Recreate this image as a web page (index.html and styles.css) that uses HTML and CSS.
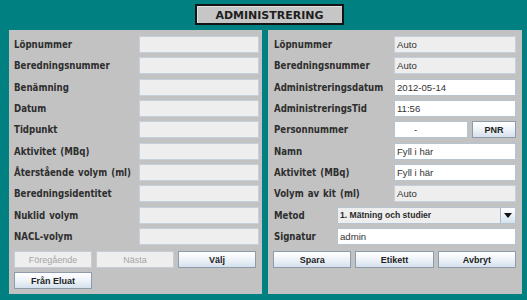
FILE: index.html
```html
<!DOCTYPE html>
<html lang="sv">
<head>
<meta charset="utf-8">
<title>Administrering</title>
<link rel="stylesheet" href="styles.css">
</head>
<body>
<div class="app">
  <div class="titlebar"><div class="title">ADMINISTRERING</div></div>
  <div class="panels">
    <section class="panel panel-left">
      <div class="rows">
        <div class="row"><span class="label">Löpnummer</span><span class="field off"></span></div>
        <div class="row"><span class="label">Beredningsnummer</span><span class="field off"></span></div>
        <div class="row"><span class="label">Benämning</span><span class="field off"></span></div>
        <div class="row"><span class="label">Datum</span><span class="field off"></span></div>
        <div class="row"><span class="label">Tidpunkt</span><span class="field off"></span></div>
        <div class="row"><span class="label">Aktivitet (MBq)</span><span class="field off"></span></div>
        <div class="row"><span class="label">Återstående volym (ml)</span><span class="field off"></span></div>
        <div class="row"><span class="label">Beredningsidentitet</span><span class="field off"></span></div>
        <div class="row"><span class="label">Nuklid volym</span><span class="field off"></span></div>
        <div class="row"><span class="label">NACL-volym</span><span class="field off"></span></div>
      </div>
      <div class="btns btns-left">
        <span class="btn disabled">Föregående</span>
        <span class="btn disabled">Nästa</span>
        <span class="btn">Välj</span>
        <span class="btn">Från Eluat</span>
      </div>
    </section>
    <section class="panel panel-right">
      <div class="rows">
        <div class="row"><span class="label">Löpnummer</span><span class="field off wide">Auto</span></div>
        <div class="row"><span class="label">Beredningsnummer</span><span class="field off wide">Auto</span></div>
        <div class="row"><span class="label">Administreringsdatum</span><span class="field on wide">2012-05-14</span></div>
        <div class="row"><span class="label">AdministreringsTid</span><span class="field on wide">11:56</span></div>
        <div class="row"><span class="label">Personnummer</span><span class="pnr-group"><span class="field on pnr">-</span><span class="btn pnr-btn">PNR</span></span></div>
        <div class="row"><span class="label">Namn</span><span class="field on wide">Fyll i här</span></div>
        <div class="row"><span class="label">Aktivitet (MBq)</span><span class="field on wide">Fyll i här</span></div>
        <div class="row"><span class="label">Volym av kit (ml)</span><span class="field off wide">Auto</span></div>
        <div class="row"><span class="label short">Metod</span><span class="combo"><span class="combo-text">1. Mätning och studier</span><span class="combo-arrow"><svg width="8" height="5" viewBox="0 0 8 5"><path d="M0 0H8L4 5Z" fill="#111"/></svg></span></span></div>
        <div class="row"><span class="label short">Signatur</span><span class="field on grow">admin</span></div>
      </div>
      <div class="btns btns-right">
        <span class="btn">Spara</span>
        <span class="btn">Etikett</span>
        <span class="btn">Avbryt</span>
      </div>
    </section>
  </div>
</div>
</body>
</html>
```
FILE: styles.css
```css
html, body {
  margin: 0;
  padding: 0;
}
body {
  background: #008080;
  width: 527px;
  height: 300px;
  overflow: hidden;
}
.app {
  display: flex;
  flex-direction: column;
}
.titlebar {
  height: 30px;
  box-sizing: border-box;
  padding: 4px 0 0 195px;
  display: flex;
  align-items: flex-start;
}
.title {
  width: 149px;
  height: 21px;
  box-sizing: border-box;
  border: 2px solid #141414;
  background: #c6c6c6;
  box-shadow: inset 1px 1px 0 #e2e2e2;
  display: flex;
  align-items: center;
  justify-content: center;
  font: bold 11px "DejaVu Sans", sans-serif;
  color: #1e1e1e;
  padding-top: 1px;
}
.panels {
  display: flex;
  gap: 6px;
  padding-left: 9px;
  height: 264px;
}
.panel {
  background: #c2c2c2;
  box-sizing: border-box;
  height: 264px;
  display: flex;
  flex-direction: column;
}
.panel-left {
  width: 253px;
  padding: 6px 3px 0 5px;
}
.panel-right {
  width: 254px;
  padding: 6px 6px 0 6px;
}
.rows {
  display: flex;
  flex-direction: column;
  gap: 4.33px;
}
.row {
  display: flex;
  align-items: center;
  height: 17px;
}
.label {
  flex: 1;
  font-family: "DejaVu Sans", sans-serif;
  font-stretch: condensed;
  font-weight: bold;
  font-size: 9.6px;
  word-spacing: 1px;
  color: #2e2e2e;
  white-space: nowrap;
}
.label.short {
  flex: 0 0 63px;
}
.field {
  width: 120px;
  height: 17px;
  box-sizing: border-box;
  border: 1px solid #c4d0dc;
  font: 9.6px "Liberation Sans", Arial, sans-serif;
  color: #333;
  padding-left: 2px;
  display: flex;
  align-items: center;
  white-space: nowrap;
}
.field.off {
  background: #eeeeee;
}
.field.on {
  background: #ffffff;
  border-color: #b6c3d0;
}
.field.wide {
  width: 122px;
}
.field.grow {
  flex: 1;
  width: auto;
}
.pnr-group {
  display: flex;
  gap: 4px;
  width: 122px;
}
.field.pnr {
  width: 74px;
  padding-left: 19px;
}
.btn {
  height: 17px;
  box-sizing: border-box;
  border: 1px solid #8e9baa;
  background: linear-gradient(#ffffff, #f2f6fa 40%, #d5e1ed);
  font: bold 9px "Liberation Sans", Arial, sans-serif;
  color: #222;
  display: flex;
  align-items: center;
  justify-content: center;
  white-space: nowrap;
}
.btn.disabled {
  background: #eeeeee;
  border-color: #c6ccd3;
  color: #a5a5a5;
  font-weight: normal;
}
.pnr-btn {
  flex: 1;
}
.btns {
  display: grid;
  grid-template-columns: repeat(3, 1fr);
  gap: 4px;
  margin-top: 6.5px;
}
.btns-left {
  margin-right: 3px;
  margin-left: 0;
}
.btns-right {
  margin-left: -1px;
}
.combo {
  flex: 1;
  height: 17px;
  box-sizing: border-box;
  border: 1px solid #b6c3d0;
  background: #eeeeee;
  display: flex;
}
.combo-text {
  flex: 1;
  font: bold 8.6px "Liberation Sans", Arial, sans-serif;
  color: #2a2a2a;
  display: flex;
  align-items: center;
  padding-left: 2px;
}
.combo-arrow {
  width: 14px;
  border-left: 1px solid #a9b6c4;
  background: linear-gradient(#ffffff, #d5e1ed);
  display: flex;
  align-items: center;
  justify-content: center;
}
```
